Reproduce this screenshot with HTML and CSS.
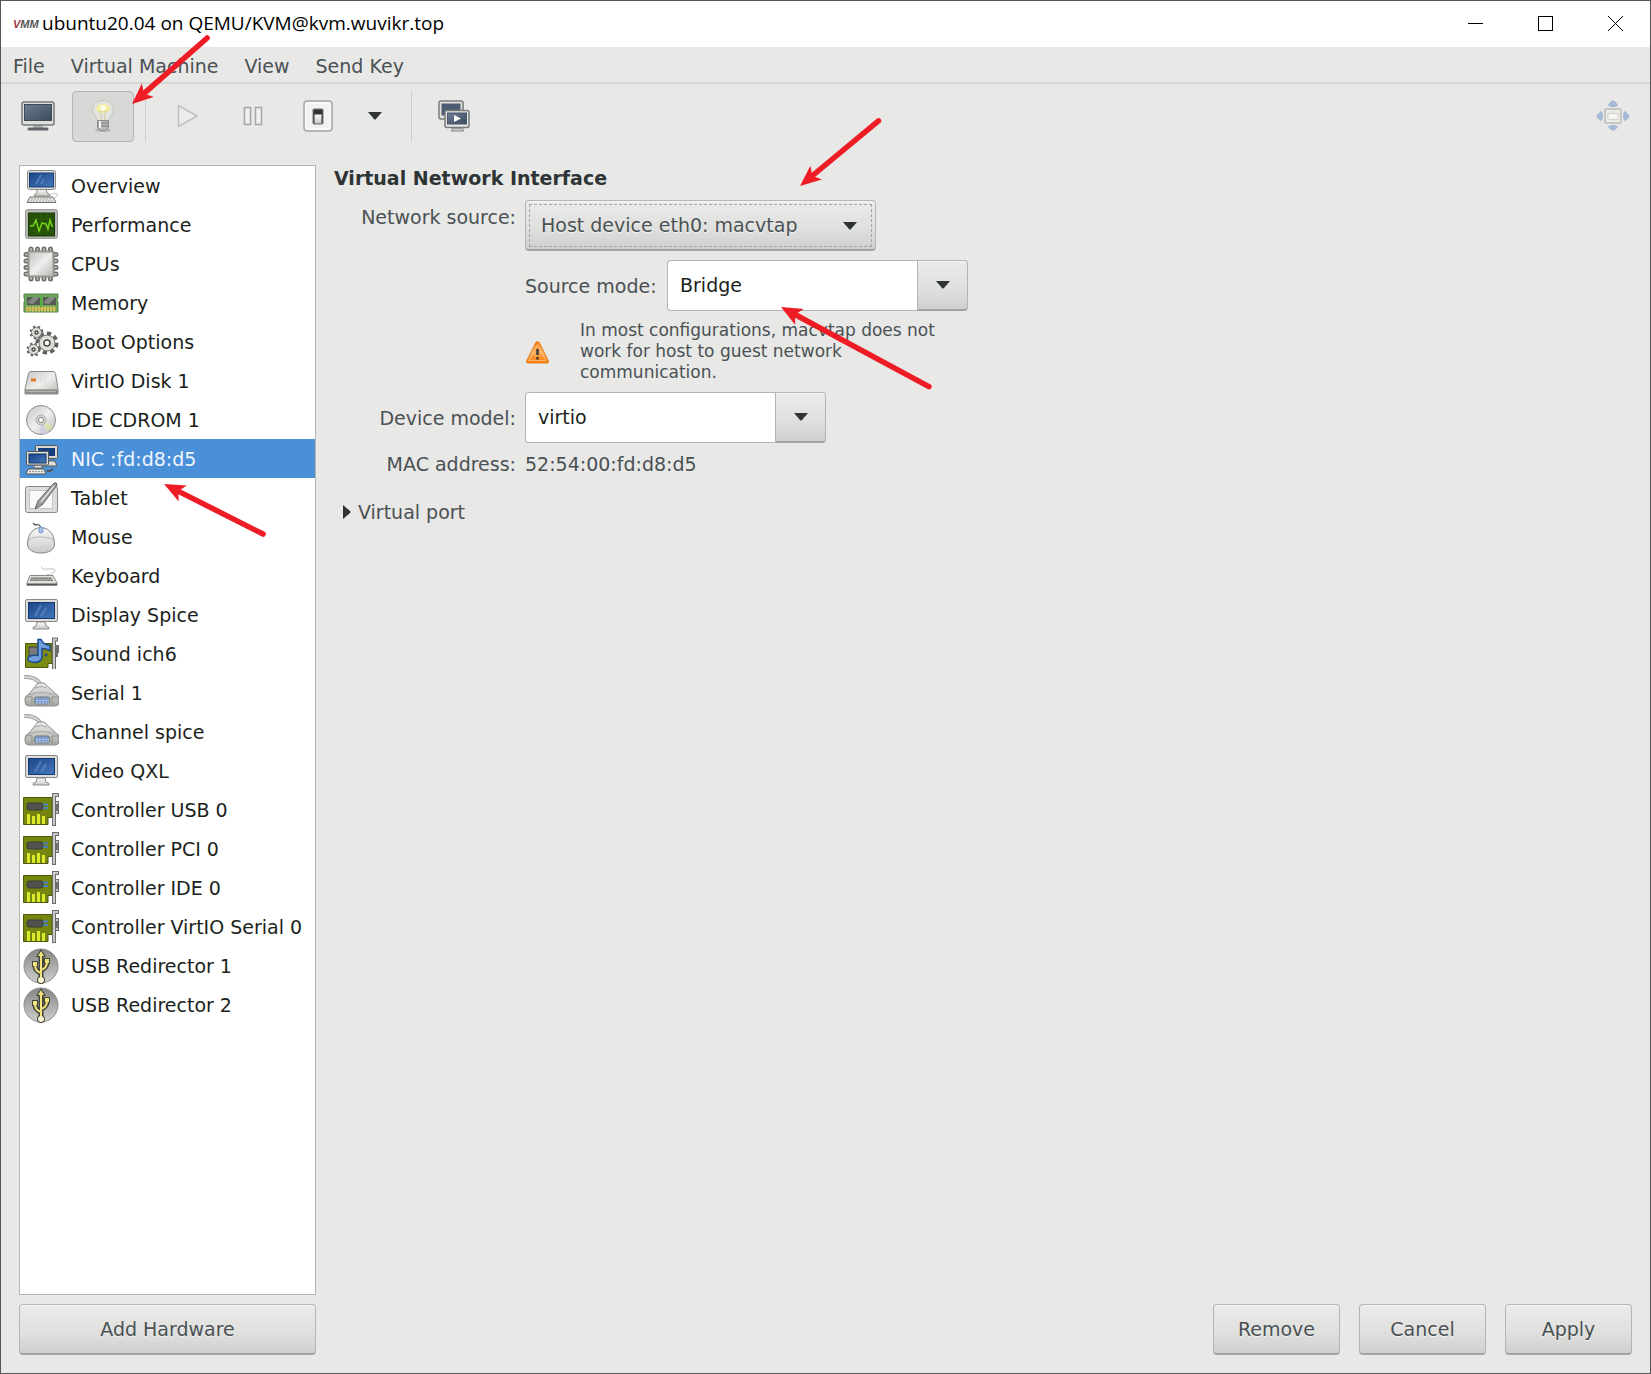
FILE: index.html
```html
<!DOCTYPE html>
<html lang="en">
<head>
<meta charset="utf-8">
<title>ubuntu20.04 on QEMU/KVM@kvm.wuvikr.top</title>
<link rel="stylesheet" href="styles.css">
</head>
<body>
<svg class="sprite" aria-hidden="true">
  <defs>
    <linearGradient id="g-screen" x1="0" y1="0" x2="1" y2="1"><stop offset="0" stop-color="#1c4587"/><stop offset="1" stop-color="#4478bd"/></linearGradient>
    <linearGradient id="g-slate" x1="0" y1="0" x2="1" y2="1"><stop offset="0" stop-color="#6d7f95"/><stop offset="1" stop-color="#3b4a5e"/></linearGradient>
    <linearGradient id="g-metal" x1="0" y1="0" x2="1" y2="1"><stop offset="0" stop-color="#c4c4c2"/><stop offset=".5" stop-color="#eeeeec"/><stop offset="1" stop-color="#bdbdbb"/></linearGradient>
    <linearGradient id="g-plastic" x1="0" y1="0" x2="0" y2="1"><stop offset="0" stop-color="#fafafa"/><stop offset="1" stop-color="#c9c9c7"/></linearGradient>
    <linearGradient id="g-shell" x1="0" y1="0" x2="0" y2="1"><stop offset="0" stop-color="#ececea"/><stop offset="1" stop-color="#a4a6a2"/></linearGradient>
    <linearGradient id="g-orange" x1="0" y1="0" x2="0" y2="1"><stop offset="0" stop-color="#f57900"/><stop offset=".5" stop-color="#fcaf5e"/><stop offset="1" stop-color="#f57900"/></linearGradient>
    <linearGradient id="g-usb" x1="0" y1="0" x2="0" y2="1"><stop offset="0" stop-color="#858583"/><stop offset="1" stop-color="#cfcfcd"/></linearGradient>
  </defs>
  <symbol id="i-overview" viewBox="0 0 36 36">
    <path d="M26 27q10-4 8 1l-3 3" fill="none" stroke="#c4c4c2"/>
    <path d="M14 21h9l1 4q3 1 3 3H11q0-2 3-3z" fill="url(#g-plastic)" stroke="#8a8a87"/>
    <rect x="4.500" y="2.500" width="28" height="19" rx="2" fill="#dcdcd8" stroke="#888a85"/>
    <rect x="6.500" y="5" width="24" height="14" fill="url(#g-screen)" stroke="#163a70"/>
    <path d="M13 16l5-9M18 16l3-5" stroke="#6f9bd2" stroke-width="2" opacity=".5"/>
    <path d="M7 29h23l3 5.500H4z" fill="#e4e4e0" stroke="#73736f"/>
    <path d="M8 31h21M7 33h24" stroke="#a8a8a4" stroke-dasharray="2 1"/>
  </symbol>
  <symbol id="i-performance" viewBox="0 0 36 36">
    <rect x="2.500" y="2.500" width="32" height="29" rx="2" fill="#b4b6b2" stroke="#9a9c98"/>
    <rect x="5.500" y="6" width="26" height="23" fill="#245008" stroke="#1c3a0a"/>
    <path d="M6 12h25M6 18h25M6 24h25M12 6v22M18 6v22M24 6v22" stroke="#3a6a18" opacity=".5"/>
    <path d="M7 19h3l3-6 3 11 3-8 4 1 2 5 2-9 2 6h1" fill="none" stroke="#73d216" stroke-width="1.500"/>
  </symbol>
  <symbol id="i-cpu" viewBox="0 0 36 36">
    <path d="M8 3v30M14.500 3v30M21 3v30M27.500 3v30M3 8.500h30M3 15h30M3 21.500h30M3 28h30" stroke="#6d6f6b" stroke-width="5" stroke-linecap="round"/>
    <path d="M8 3v30M14.500 3v30M21 3v30M27.500 3v30M3 8.500h30M3 15h30M3 21.500h30M3 28h30" stroke="#b9bbb7" stroke-width="2" stroke-linecap="round"/>
    <rect x="5" y="5" width="26" height="26" rx="1" fill="#b0b2ae" stroke="#7f817d"/>
    <rect x="7" y="7" width="22" height="22" fill="url(#g-metal)"/>
  </symbol>
  <symbol id="i-memory" viewBox="0 0 36 36">
    <path d="M1 9h34v4q-2 2 0 4v10H1V17q2-2 0-4z" fill="#69a659" stroke="#55804a"/>
    <rect x="4" y="12" width="13" height="8" fill="#555a57"/><rect x="20" y="12" width="13" height="8" fill="#555a57"/>
    <path d="M4 18l6-6h7l-7 7zM20 18l6-6h7l-7 7z" fill="#858985"/>
    <path d="M3 24h30" stroke="#e0c95c" stroke-width="5" stroke-dasharray="2 1"/><path d="M3 24h30" stroke="#c8b653" stroke-width="2"/>
    <path d="M18 11v11" stroke="#41b32e"/>
  </symbol>
  <symbol id="i-boot" viewBox="0 0 36 36">
    <g fill="none" stroke="#5f615e">
      <circle cx="13.500" cy="8.500" r="5" stroke-width="4" stroke-dasharray="2 2"/><circle cx="10.500" cy="25.500" r="5" stroke-width="4" stroke-dasharray="2 2"/>
      <circle cx="24" cy="19" r="9" stroke-width="5" stroke-dasharray="4 3"/>
    </g>
    <g fill="#dededb" stroke="#777975">
      <circle cx="13.500" cy="8.500" r="5"/><circle cx="10.500" cy="25.500" r="5"/><circle cx="24" cy="19" r="8"/>
    </g>
    <g fill="#fff" stroke="#4a4c49" stroke-width="1.500">
      <circle cx="13.500" cy="8.500" r="1.500"/><circle cx="10.500" cy="25.500" r="1.500"/><circle cx="24" cy="19" r="3"/>
    </g>
  </symbol>
  <symbol id="i-disk" viewBox="0 0 36 36">
    <path d="M8 8.500h22q2 0 2.500 2L35 26v5H2v-5L5.500 10.500q.5-2 2.500-2z" fill="url(#g-metal)" stroke="#888a85"/>
    <path d="M3 27h31v3H3z" fill="#b2b4b0" stroke="#6d6f6b"/>
    <rect x="8" y="15.500" width="5" height="3" fill="#e0782a"/>
    <path d="M18 12v8M22 12v8" stroke="#e0e0de" stroke-width="2"/>
  </symbol>
  <symbol id="i-cdrom" viewBox="0 0 36 36">
    <circle cx="18" cy="18" r="14.500" fill="url(#g-metal)" stroke="#8c8e8a"/>
    <path d="M18 18L30 24A14 14 0 0 1 24 30z" fill="#dfe0a8" opacity=".7"/><path d="M18 18L25 31A14 14 0 0 1 17 32z" fill="#cdc8e4" opacity=".7"/>
    <circle cx="18" cy="18" r="5" fill="#d0d1d0" stroke="#aeb0ad"/><circle cx="18" cy="18" r="2.500" fill="#fff" stroke="#888a85"/>
  </symbol>
  <symbol id="i-nic" viewBox="0 0 36 36">
    <path d="M20 20h12l2 5H18z" fill="#dededa" stroke="#5a5c58"/>
    <rect x="12.500" y="4.500" width="22" height="13" rx="1" fill="#d8d8d4" stroke="#555753"/><rect x="15" y="7" width="17" height="8" fill="#163d7c"/>
    <path d="M11 24h8v3h-8z" fill="#ddd" stroke="#666"/>
    <rect x="3.500" y="10.500" width="22" height="13.500" rx="1" fill="#deded9" stroke="#555753"/><rect x="6" y="13" width="17" height="9" fill="url(#g-screen)" stroke="#102f63"/>
    <path d="M5 28h16l2 5H3z" fill="#e6e6e2" stroke="#555753"/><path d="M6 30.500h15" stroke="#989a95" stroke-dasharray="2 1"/>
    <path d="M24 30h3l3-2" fill="none" stroke="#555753" stroke-width="2"/>
  </symbol>
  <symbol id="i-tablet" viewBox="0 0 36 36">
    <rect x="2.500" y="6.500" width="32" height="26" rx="2" fill="#dcdcda" stroke="#888a85"/><rect x="6.500" y="10.500" width="23" height="18" fill="#fafafa" stroke="#c4c6c2"/>
    <path d="M31 3q3-1 3 2L19 25l-7 4 3-8z" fill="#9da09c" stroke="#5d5f5b"/><path d="M31 6L18 22" stroke="#dedfdd" stroke-width="1.500"/>
  </symbol>
  <symbol id="i-mouse" viewBox="0 0 36 36">
    <path d="M10 4l2 2q5-2 6 4" fill="none" stroke="#666864" stroke-width="1.500"/>
    <path d="M18 8.500C8 9 4.500 18 4.500 25c0 6 6 9 13.500 9s13.500-3 13.500-9C31.500 18 28 9 18 8.500z" fill="url(#g-plastic)" stroke="#858782"/>
    <path d="M5 23q1-5 12-5 14 0 14 5" fill="none" stroke="#b5b7b3"/><rect x="16" y="8" width="4" height="6" rx="2" fill="#a9c8ec" stroke="#6f97c9"/>
  </symbol>
  <symbol id="i-keyboard" viewBox="0 0 36 36">
    <path d="M19 8q-2 4 6 3t7 2-9 4" fill="none" stroke="#c4c6c2"/>
    <path d="M7 17.500h23L34 25v2H4v-2z" fill="#e1e1de" stroke="#888a85"/>
    <path d="M8.500 19h20l2 4h-24z" fill="#a5a7a3"/>
    <path d="M8 20.500h21M7 22.500h23" stroke="#777975" stroke-dasharray="2 1"/><path d="M4 26.500h30" stroke="#555753" stroke-width="2"/>
  </symbol>
  <symbol id="i-display" viewBox="0 0 36 36">
    <path d="M14 25h8l1 4q4 1 3 3H10q-1-2 3-3z" fill="url(#g-plastic)" stroke="#8a8a87"/>
    <rect x="2.500" y="2.500" width="32" height="22" rx="1.500" fill="#dcdcd8" stroke="#888a85"/>
    <rect x="5.500" y="5.500" width="26" height="16" fill="url(#g-screen)" stroke="#163a70"/>
    <path d="M12 19l6-11M18 19l5-8" stroke="#6f9bd2" stroke-width="2.500" opacity=".45"/>
  </symbol>
  <symbol id="i-sound" viewBox="0 0 36 36">
    <path d="M2.500 7.500H29v20h-4v4H2.500z" fill="#7d8c12" stroke="#4f590e"/><rect x="6" y="11" width="9" height="9" fill="#77797a" stroke="#3f413e"/>
    <path d="M35 3.500h-4V33M32 11h3v4h-3M32 19h3" fill="none" stroke="#6c6e6a" stroke-width="4"/><path d="M34 3.500h-3V33" fill="none" stroke="#c9cac7" stroke-width="2"/>
    <path d="M15 3.500h3q2 5 9 6v5q-4-2-8-2v9q-1 5-8 5-7-1-6-4 1-4 10-3z" fill="#6f9fdc" stroke="#1f4b8e" stroke-width="1.500"/>
    <circle cx="23" cy="19" r="1.500" fill="#204a87"/>
  </symbol>
  <symbol id="i-serial" viewBox="0 0 36 36">
    <path d="M1 2q12-1 17 8" fill="none" stroke="#a4a6a2" stroke-width="4"/><path d="M1 2q12-1 17 8" fill="none" stroke="#d6d7d4" stroke-width="2"/>
    <path d="M15 8h6l12 11q3 1 3 5v3q0 4-4 4H6q-4 0-4-4v-3q0-3 4-5z" fill="url(#g-shell)" stroke="#8c8e8a"/>
    <path d="M6 20q12-5 26 0M12 13q6-3 12 0" fill="none" stroke="#a4a6a2"/><rect x="11.500" y="22" width="15" height="7" rx="2" fill="#7c9fd0" stroke="#7b7d79"/><path d="M13 25.500h13M13 28h13" stroke="#bcd2ee" stroke-dasharray="2 1"/>
    <path d="M3 22q4-1 6 0v8M29 30v-8h6" fill="none" stroke="#8e908c"/>
  </symbol>
  <symbol id="i-card" viewBox="0 0 36 36">
    <path d="M.5 5.500H29v20h-4v7H.5z" fill="#76850f" stroke="#4f590e"/>
    <path d="M5.500 22v10M10.500 24v8M15.500 22v10M20.500 24v8" stroke="#dbea2a" stroke-width="3"/>
    <rect x="4" y="11" width="16" height="7" rx="2" fill="#50534f" stroke="#3b3d39"/><path d="M20 12.500h5M20 16h5" stroke="#4a7fb8" stroke-width="2"/>
    <path d="M36 3h-5v31M33 11h3M33 20h3M35 11v9" fill="none" stroke="#6c6e6a" stroke-width="4"/><path d="M35 3h-4v30M33 11h2M33 20h2" fill="none" stroke="#c9cac7" stroke-width="2"/>
  </symbol>
  <symbol id="i-usb" viewBox="0 0 36 36">
    <circle cx="18" cy="18" r="17" fill="url(#g-usb)" stroke="#8d8f8b"/>
    <g fill="none" stroke="#45463d" stroke-width="5" stroke-linejoin="round"><path d="M18 5v26M18 25q-6-2-6-8M18 22q6-2 6-8"/></g>
    <path d="M18 1l-5 8h10zM9 13h6v6H9zM20 10h7v6h-7z" fill="#45463d"/><circle cx="18" cy="32" r="4" fill="#45463d"/>
    <g fill="none" stroke="#f1e27c" stroke-width="2"><path d="M18 5v26M18 25q-6-2-6-8M18 22q6-2 6-8"/></g>
    <path d="M18 3l-3 5h6zM10 14h4v4h-4zM22 11h4v4h-4z" fill="#f1e27c"/><circle cx="18" cy="32" r="3" fill="#f7f1cf"/>
  </symbol>
  <symbol id="i-down" viewBox="0 0 16 8"><path d="M1 0h14L9 7q-1 1-2 0z" fill="#2e3436"/></symbol>
</svg>

<header class="titlebar">
  <span class="logo" aria-hidden="true"><b>V</b>MM</span>
  <h1 class="title">ubuntu20.04 on QEMU/KVM@kvm.wuvikr.top</h1>
  <div class="controls">
    <button type="button" aria-label="Minimize"><svg width="15" height="15"><path d="M0 7.500h15" stroke="#000"/></svg></button>
    <button type="button" aria-label="Maximize"><svg width="15" height="15"><rect x=".5" y=".5" width="14" height="14" fill="none" stroke="#000"/></svg></button>
    <button type="button" aria-label="Close"><svg width="15" height="15"><path d="M0 0l15 15M15 0L0 15" stroke="#000"/></svg></button>
  </div>
</header>

<nav class="menubar">
  <button type="button">File</button><button type="button">Virtual Machine</button><button type="button">View</button><button type="button">Send Key</button>
</nav>

<div class="toolbar" role="toolbar">
  <button type="button" class="tool" aria-label="Console"><svg width="34" height="30" viewBox="0 0 34 30">
    <path d="M13 23h8l1 4H12z" fill="#aaaca8"/><path d="M8 28h18" stroke="#62656a" stroke-width="3" stroke-linecap="round"/>
    <rect x="1" y="1" width="32" height="23" rx="2" fill="#dededb" stroke="#777a7c" stroke-width="1.500"/><rect x="3.500" y="3.500" width="27" height="16" fill="url(#g-slate)" stroke="#3e4956"/></svg></button>
  <button type="button" class="tool pressed" aria-label="Details" aria-pressed="true"><svg width="24" height="34" viewBox="0 0 24 34">
    <ellipse cx="12" cy="31" rx="8" ry="2" fill="#b5b5b3"/><path d="M12 1.500C5 1.500 1.500 6 1.500 11c0 4 4.500 7 5 11h11c.5-4 5-7 5-11C22.500 6 19 1.500 12 1.500z" fill="#e4e4de" stroke="#c2c2bf"/>
    <path d="M5 10q1-5 7-5t7 5q-2 4-7 4t-7-4z" fill="#f5ee9c"/><path d="M8 12h8M10 13v8M14 13v8" stroke="#cfc8a0" fill="none"/><circle cx="12" cy="9" r="3" fill="#fffde6"/>
    <path d="M6.500 21.500h11v7l-3 3h-5l-3-3z" fill="#b9b9b7" stroke="#8b8b89"/><path d="M7 24h10M7 27h10" stroke="#777975"/><path d="M9 22v7" stroke="#f3f3f2" stroke-width="2"/></svg></button>
  <span class="sep"></span>
  <button type="button" class="tool" aria-label="Run" disabled><svg width="22" height="24" viewBox="0 0 22 24"><path d="M1.500 1.500v21L20 12z" fill="#ececea" stroke="#bfc0be" stroke-width="1.500" stroke-linejoin="round"/></svg></button>
  <button type="button" class="tool" aria-label="Pause"><svg width="20" height="20" viewBox="0 0 20 20"><path d="M1.500 1.500h6v17h-6zM12.500 1.500h6v17h-6z" fill="#f0f0ee" stroke="#a5a7a4" stroke-width="1.500"/></svg></button>
  <button type="button" class="tool" aria-label="Shut down"><svg width="30" height="32" viewBox="0 0 30 32">
    <rect x="1" y="1" width="28" height="30" rx="3" fill="#f2f2f1" stroke="#a4a6a3" stroke-width="1.500"/><rect x="3" y="3" width="24" height="26" rx="2" fill="none" stroke="#fff"/>
    <rect x="10" y="9" width="10" height="15" rx="1" fill="#2e3436" stroke="#777"/><rect x="11.500" y="14.500" width="7" height="9" fill="url(#g-plastic)"/></svg></button>
  <button type="button" class="tool narrow" aria-label="Shut down options"><svg width="16" height="8"><use href="#i-down"/></svg></button>
  <span class="sep"></span>
  <button type="button" class="tool" aria-label="Snapshots"><svg width="32" height="32" viewBox="0 0 32 32">
    <rect x="1" y="1" width="24" height="18" rx="2" fill="#e2e2df" stroke="#777a7c" stroke-width="1.500"/><rect x="3.500" y="3.500" width="19" height="12" fill="#4c5c72"/>
    <path d="M15 28h9l2 3H13z" fill="#c9c9c6" stroke="#888"/><rect x="7" y="10.500" width="24" height="17" rx="2" fill="#e6e6e3" stroke="#777a7c" stroke-width="1.500"/><rect x="9.500" y="13" width="19" height="11" fill="url(#g-slate)" stroke="#45546a"/><path d="M16 15v7l7-3.500z" fill="#fff"/></svg></button>
  <button type="button" class="tool last" aria-label="Fullscreen"><svg width="34" height="32" viewBox="0 0 34 32">
    <path d="M12 5l3-4q2-1 4 0l3 4q-1 2-5 2t-5-2zM12 27l3 3q2 1 4 0l3-3q-1-2-5-2t-5 2zM5 11l-4 4q-1 1 0 3l4 3q2-1 2-5t-2-5zM29 11l4 4q1 1 0 3l-4 3q-2-1-2-5t2-5z" fill="#a5b8d4"/>
    <rect x="9" y="9" width="16" height="14" rx="1" fill="#e9e9e6" stroke="#bcbdb9" stroke-width="1.500"/><rect x="12" y="13.500" width="10" height="6" fill="#f5f5f3" stroke="#d2d2cf"/></svg></button>
</div>

<main class="main">
  <aside class="side">
    <ul class="hardware">
      <li><button type="button"><svg><use href="#i-overview"/></svg>Overview</button></li>
      <li><button type="button"><svg><use href="#i-performance"/></svg>Performance</button></li>
      <li><button type="button"><svg><use href="#i-cpu"/></svg>CPUs</button></li>
      <li><button type="button"><svg><use href="#i-memory"/></svg>Memory</button></li>
      <li><button type="button"><svg><use href="#i-boot"/></svg>Boot Options</button></li>
      <li><button type="button"><svg><use href="#i-disk"/></svg>VirtIO Disk 1</button></li>
      <li><button type="button"><svg><use href="#i-cdrom"/></svg>IDE CDROM 1</button></li>
      <li><button type="button" class="selected" aria-current="true"><svg><use href="#i-nic"/></svg>NIC :fd:d8:d5</button></li>
      <li><button type="button"><svg><use href="#i-tablet"/></svg>Tablet</button></li>
      <li><button type="button"><svg><use href="#i-mouse"/></svg>Mouse</button></li>
      <li><button type="button"><svg><use href="#i-keyboard"/></svg>Keyboard</button></li>
      <li><button type="button"><svg><use href="#i-display"/></svg>Display Spice</button></li>
      <li><button type="button"><svg><use href="#i-sound"/></svg>Sound ich6</button></li>
      <li><button type="button"><svg><use href="#i-serial"/></svg>Serial 1</button></li>
      <li><button type="button"><svg><use href="#i-serial"/></svg>Channel spice</button></li>
      <li><button type="button"><svg><use href="#i-display"/></svg>Video QXL</button></li>
      <li><button type="button"><svg><use href="#i-card"/></svg>Controller USB 0</button></li>
      <li><button type="button"><svg><use href="#i-card"/></svg>Controller PCI 0</button></li>
      <li><button type="button"><svg><use href="#i-card"/></svg>Controller IDE 0</button></li>
      <li><button type="button"><svg><use href="#i-card"/></svg>Controller VirtIO Serial 0</button></li>
      <li><button type="button"><svg><use href="#i-usb"/></svg>USB Redirector 1</button></li>
      <li><button type="button"><svg><use href="#i-usb"/></svg>USB Redirector 2</button></li>
    </ul>
    <button type="button" class="btn">Add Hardware</button>
  </aside>

  <section class="details">
    <h2>Virtual Network Interface</h2>
    <div class="form">
      <label class="top" for="source">Network source:</label>
      <div class="select">
        <select id="source"><option>Host device eth0: macvtap</option></select>
        <svg width="16" height="8"><use href="#i-down"/></svg>
      </div>
      <div class="mode">
        <label for="mode">Source mode:</label>
        <div class="combo"><input id="mode" type="text" value="Bridge"><button type="button" aria-label="Show source modes"><svg width="16" height="8"><use href="#i-down"/></svg></button></div>
      </div>
      <div class="warning">
        <svg width="25" height="24" viewBox="0 0 25 24"><path d="M12.500 1.500q1.500 0 2 1.500l9 18q0 2-1 2h-20q-1 0-1-2l9-18q.5-1.500 2-1.500z" fill="url(#g-orange)" stroke="#e8842a"/><path d="M12.500 4.500L4 20.500h17z" fill="none" stroke="#ffd7a6" opacity=".6"/><path d="M12.500 9v6M12.500 17v2.500" stroke="#3c3c3a" stroke-width="2.500"/></svg>
        <p>In most configurations, macvtap does not<br>work for host to guest network<br>communication.</p>
      </div>
      <label for="model">Device model:</label>
      <div class="combo"><input id="model" type="text" value="virtio"><button type="button" aria-label="Show device models"><svg width="16" height="8"><use href="#i-down"/></svg></button></div>
      <span class="name">MAC address:</span>
      <span>52:54:00:fd:d8:d5</span>
    </div>
    <details class="port">
      <summary><svg width="8" height="14"><path d="M0 0l7 6q1 1 0 2l-7 6z" fill="#2e3436"/></svg>Virtual port</summary>
    </details>
    <footer class="actions">
      <button type="button" class="btn">Remove</button><button type="button" class="btn">Cancel</button><button type="button" class="btn">Apply</button>
    </footer>
  </section>
</main>

<svg class="arrows" width="1000" height="600" aria-hidden="true">
  <g fill="#ee1c25" stroke="#ee1c25" stroke-width="5.500" stroke-linecap="round">
    <g transform="translate(132 104) rotate(-41.300)"><path d="M0 0l21-9-5 9 5 9z" stroke="none"/><path d="M18 0h82"/></g>
    <g transform="translate(800 186) rotate(-39.700)"><path d="M0 0l21-9-5 9 5 9z" stroke="none"/><path d="M18 0h84"/></g>
    <g transform="translate(781 307) rotate(28.300)"><path d="M0 0l21-9-5 9 5 9z" stroke="none"/><path d="M18 0h150"/></g>
    <g transform="translate(164 484) rotate(26.800)"><path d="M0 0l21-9-5 9 5 9z" stroke="none"/><path d="M18 0h93"/></g>
  </g>
</svg>
</body>
</html>
```
FILE: styles.css
```css
* { box-sizing: border-box; }

body {
  margin: 0;
  min-height: 100vh;
  display: flex;
  flex-direction: column;
  position: relative;
  border: 1px solid #555456;
  background: #e8e8e6;
  color: #4a5154;
  font: 19px/24px "DejaVu Sans", sans-serif;
}

button, input, select { font: inherit; color: inherit; margin: 0; }
button { border: 0; padding: 0; background: none; }
svg { display: block; flex: none; }
.sprite { position: absolute; width: 0; height: 0; }

.titlebar {
  display: flex;
  align-items: center;
  height: 46px;
  padding-left: 12px;
  background: #fff;
}
.logo {
  width: 25px;
  margin-right: 4px;
  color: #55565a;
  font: italic bold 11px/12px "Liberation Sans", sans-serif;
}
.logo b { color: #a03a48; }
.title {
  margin: 0;
  padding-bottom: 2px;
  color: #000;
  font: 19px/24px "Open Sans", sans-serif;
}
.controls { display: flex; align-self: stretch; margin-left: auto; padding-bottom: 2px; }
.controls button { display: grid; place-items: center; width: 70px; }

.menubar {
  display: flex;
  gap: 2px;
  height: 37px;
  border-bottom: 2px solid #d6d6d4;
}
.menubar button { padding: 2px 12px 0; }

.toolbar {
  display: flex;
  gap: 3px;
  padding: 7px 6px;
}
.tool {
  display: grid;
  place-items: center;
  width: 62px;
  height: 51px;
  padding-bottom: 2px;
  border: 1px solid transparent;
  border-radius: 4px;
}
.tool.pressed { background: #d8d8d6; border-color: #b4b4b2; }
.tool.narrow { width: 48px; padding-right: 2px; }
.tool.last { margin-left: auto; }
.sep { width: 1px; margin: 0 8px; background: #cfcfcd; }

.main {
  flex: 1;
  display: flex;
  gap: 18px;
  padding: 16px 18px 18px;
}

.side {
  display: flex;
  flex-direction: column;
  gap: 9px;
  width: 297px;
}
.hardware {
  flex: 1;
  margin: 0;
  padding: 0;
  list-style: none;
  background: #fff;
  border: 1px solid #b6b6b4;
}
.hardware button {
  display: flex;
  align-items: center;
  gap: 12px;
  width: 100%;
  height: 39px;
  padding-left: 3px;
  color: #1c1f20;
  white-space: nowrap;
}
.hardware svg { width: 36px; height: 36px; }
.hardware .selected { background: #4a90d9; color: #f0f5fb; }

.btn, .select select, .combo button {
  height: 51px;
  border: 1px solid #b4b4b2;
  border-bottom: 2px solid #a3a3a1;
  border-radius: 4px;
  background: linear-gradient(#ebebe9, #dfdfdd 60%, #cfcfcd);
  box-shadow: inset 0 1px #f6f6f5;
  text-shadow: 0 1px #f2f2f1;
}

.details { flex: 1; display: flex; flex-direction: column; }
.details h2 {
  margin: 0 0 10px;
  padding-top: 1px;
  color: #2e3436;
  font-size: 19px;
  line-height: 24px;
}
.form {
  display: grid;
  grid-template-columns: 182px auto;
  justify-content: start;
  align-items: center;
  gap: 9px;
}
.form > label, .name { text-align: right; }
.form > .top { align-self: start; padding-top: 5px; }

.select { position: relative; width: 351px; }
.select select {
  width: 100%;
  padding: 0 15px;
  appearance: none;
  outline: 1px dashed #a3a5a3;
  outline-offset: -5px;
}
.select svg { position: absolute; right: 18px; top: 22px; pointer-events: none; }

.mode, .warning { grid-column: 2; display: flex; align-items: center; }
.mode { gap: 9px; }
.mode label { width: 133px; white-space: nowrap; }
.combo { display: flex; width: 301px; }
.combo input {
  flex: 1;
  min-width: 0;
  height: 51px;
  padding: 0 12px 2px;
  border: 1px solid #b4b4b2;
  border-right: 0;
  border-radius: 4px 0 0 4px;
  background: #fff;
  color: #1c1f20;
}
.combo button {
  display: grid;
  place-items: center;
  width: 51px;
  border-radius: 0 4px 4px 0;
}

.warning { gap: 30px; }
.warning p { margin: 0; font-size: 17px; line-height: 21px; }

.port { margin-top: 24px; padding-left: 9px; }
.port summary { display: flex; align-items: center; gap: 7px; list-style: none; }

.actions {
  display: flex;
  justify-content: flex-end;
  gap: 19px;
  margin-top: auto;
}
.actions .btn { width: 127px; }

.arrows { position: absolute; top: -1px; left: -1px; pointer-events: none; }
```
